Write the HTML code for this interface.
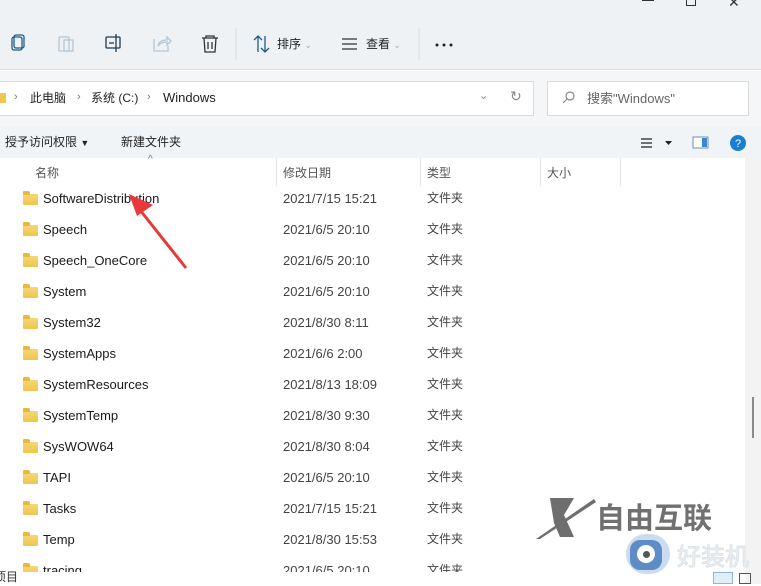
<!DOCTYPE html>
<html><head><meta charset="utf-8"><style>
*{margin:0;padding:0;box-sizing:border-box}
body{width:761px;height:584px;overflow:hidden;background:#fff;font-family:"Liberation Sans","Noto Sans CJK SC",sans-serif;font-size:12px;line-height:16px;color:#222;position:relative}
.abs{position:absolute}
.top{left:0;top:0;width:761px;height:70px;background:#eef2f5;border-bottom:1px solid #dde1e4}
.addrzone{left:0;top:71px;width:761px;height:56px;background:#f4f6f8}
.addr{left:-2px;top:81px;width:536px;height:35px;background:#fff;border:1px solid #d9dcdf}
.search{left:547px;top:81px;width:202px;height:35px;background:#fff;border:1px solid #d9dcdf}
.cmd{left:0;top:127px;width:761px;height:31px;background:#f1f4f7}
.folder{width:15px;height:11px;background:linear-gradient(#f7d774,#eec64f);border-radius:1px;position:absolute}
.folder:before{content:"";position:absolute;left:0;top:-3px;width:7px;height:4px;background:#e8b93c;border-radius:1px 2px 0 0}
.row{position:absolute;left:0;width:745px;height:31px;line-height:31px;font-size:13px}
.row span{position:absolute;top:0;line-height:31px;height:31px}
.row .n{left:43px;color:#1a1a1a}
.row .d{left:283px;color:#444}
.row .t{left:427px;color:#444;font-size:12px}
.row .folder{left:23px;top:11px}
.sep{position:absolute;top:158px;width:1px;height:28px;background:#e5e5e5}
</style></head><body>
<div class="abs top"></div>
<div class="abs" style="left:642px;top:0;width:12px;height:1px;background:#333"></div>
<div class="abs" style="left:686px;top:-4px;width:10px;height:10px;border:1px solid #333"></div>
<div class="abs" style="left:728px;top:-6px;font-size:14px;color:#333">✕</div>
<svg class="abs" style="left:0;top:25px" width="460" height="40" viewBox="0 0 460 40" fill="none" stroke-width="1.3">
<rect x="12" y="12" width="10" height="13" rx="2" stroke="#1f5a8a"/><rect x="14" y="10" width="10" height="13" rx="2" stroke="#1f5a8a"/>
<rect x="59" y="12" width="10" height="14" rx="1" stroke="#b4c6d4"/><rect x="64" y="15" width="9" height="11" stroke="#b4c6d4"/>
<rect x="106" y="12" width="14" height="11" rx="1" stroke="#1e3c55"/><line x1="116" y1="9" x2="116" y2="27" stroke="#1e3c55"/><line x1="109" y1="18" x2="114" y2="18" stroke="#1e3c55"/>
<path d="M154 14v12h14v-5M158 21c1-5 5-6 9-6v-3l4 4-4 4v-3c-4 0-7 1-9 4" stroke="#b4c6d4"/>
<path d="M202 13h16M206 13v-2h8v2M204 13l1 14h10l1-14M208 17v7M212 17v7" stroke="#333"/>
<line x1="236" y1="3" x2="236" y2="35" stroke="#dde1e4"/>
<path d="M258 11v16M254 15l4-4 4 4M265 11v16M261 23l4 4 4-4" stroke="#1f5a8a"/>
<path d="M342 14h15M342 19h15M342 24h15" stroke="#333"/>
<line x1="419" y1="3" x2="419" y2="35" stroke="#dde1e4"/>
<circle cx="437" cy="20" r="1.5" fill="#222" stroke="none"/><circle cx="444" cy="20" r="1.5" fill="#222" stroke="none"/><circle cx="451" cy="20" r="1.5" fill="#222" stroke="none"/>
</svg>
<div class="abs" style="left:277px;top:36px">排序 <span style="color:#aaa;font-size:9px">⌄</span></div>
<div class="abs" style="left:366px;top:36px">查看 <span style="color:#aaa;font-size:9px">⌄</span></div>
<div class="abs addrzone"></div>
<div class="abs addr"></div>
<div class="abs search"></div>
<div class="abs" style="left:0;top:93px;width:6px;height:10px;background:#f0c850"></div>
<div class="abs" style="left:14px;top:89px;color:#777;font-size:11px">›</div>
<div class="abs" style="left:30px;top:90px">此电脑</div>
<div class="abs" style="left:77px;top:89px;color:#777;font-size:11px">›</div>
<div class="abs" style="left:91px;top:90px">系统 (C:)</div>
<div class="abs" style="left:147px;top:89px;color:#777;font-size:11px">›</div>
<div class="abs" style="left:163px;top:90px;font-size:13px">Windows</div>
<div class="abs" style="left:479px;top:88px;color:#888;font-size:11px">⌄</div>
<div class="abs" style="left:510px;top:88px;color:#888;font-size:14px">↻</div>
<svg class="abs" style="left:562px;top:90px" width="14" height="14" fill="none" stroke="#888" stroke-width="1.2"><circle cx="8" cy="6" r="4"/><line x1="5" y1="9" x2="1" y2="13"/></svg>
<div class="abs" style="left:587px;top:91px;color:#666;font-size:13px">搜索"Windows"</div>
<div class="abs cmd"></div>
<div class="abs" style="left:5px;top:134px">授予访问权限 <span style="font-size:9px">▼</span></div>
<div class="abs" style="left:121px;top:134px">新建文件夹</div>
<svg class="abs" style="left:640px;top:135px" width="120" height="18"><path d="M1 4h11M1 8h11M1 12h11" stroke="#222" stroke-width="1.2"/><path d="M25 6h7l-3.5 4z" fill="#222"/><rect x="53" y="2" width="15" height="11" fill="#fff" stroke="#6a8fb0"/><rect x="62" y="3" width="5" height="9" fill="#3b87cf"/><circle cx="98" cy="8" r="8" fill="#1a7fd4"/><text x="98" y="12" font-size="11" fill="#fff" text-anchor="middle" font-family="Liberation Sans">?</text></svg>
<div class="abs" style="left:35px;top:165px;color:#555">名称</div>
<div class="abs" style="left:148px;top:152px;color:#777;font-size:10px">^</div>
<div class="abs" style="left:283px;top:165px;color:#555">修改日期</div>
<div class="abs" style="left:427px;top:165px;color:#555">类型</div>
<div class="abs" style="left:547px;top:165px;color:#555">大小</div>
<div class="sep" style="left:276px"></div><div class="sep" style="left:420px"></div><div class="sep" style="left:540px"></div><div class="sep" style="left:620px"></div>
<div class="abs" style="left:745px;top:158px;width:16px;height:426px;background:#f3f3f3"></div>
<div class="abs" style="left:752px;top:397px;width:2px;height:41px;background:#8a8a8a"></div>
<div class="row" style="top:183px"><div class="folder"></div><span class="n">SoftwareDistribution</span><span class="d">2021/7/15 15:21</span><span class="t">文件夹</span></div>
<div class="row" style="top:214px"><div class="folder"></div><span class="n">Speech</span><span class="d">2021/6/5 20:10</span><span class="t">文件夹</span></div>
<div class="row" style="top:245px"><div class="folder"></div><span class="n">Speech_OneCore</span><span class="d">2021/6/5 20:10</span><span class="t">文件夹</span></div>
<div class="row" style="top:276px"><div class="folder"></div><span class="n">System</span><span class="d">2021/6/5 20:10</span><span class="t">文件夹</span></div>
<div class="row" style="top:307px"><div class="folder"></div><span class="n">System32</span><span class="d">2021/8/30 8:11</span><span class="t">文件夹</span></div>
<div class="row" style="top:338px"><div class="folder"></div><span class="n">SystemApps</span><span class="d">2021/6/6 2:00</span><span class="t">文件夹</span></div>
<div class="row" style="top:369px"><div class="folder"></div><span class="n">SystemResources</span><span class="d">2021/8/13 18:09</span><span class="t">文件夹</span></div>
<div class="row" style="top:400px"><div class="folder"></div><span class="n">SystemTemp</span><span class="d">2021/8/30 9:30</span><span class="t">文件夹</span></div>
<div class="row" style="top:431px"><div class="folder"></div><span class="n">SysWOW64</span><span class="d">2021/8/30 8:04</span><span class="t">文件夹</span></div>
<div class="row" style="top:462px"><div class="folder"></div><span class="n">TAPI</span><span class="d">2021/6/5 20:10</span><span class="t">文件夹</span></div>
<div class="row" style="top:493px"><div class="folder"></div><span class="n">Tasks</span><span class="d">2021/7/15 15:21</span><span class="t">文件夹</span></div>
<div class="row" style="top:524px"><div class="folder"></div><span class="n">Temp</span><span class="d">2021/8/30 15:53</span><span class="t">文件夹</span></div>
<div class="row" style="top:555px"><div class="folder"></div><span class="n">tracing</span><span class="d">2021/6/5 20:10</span><span class="t">文件夹</span></div>
<div class="abs" style="left:0;top:572px;width:745px;height:12px;background:#fff"></div>
<div class="abs" style="left:-6px;top:570px;color:#333;line-height:14px">项目</div>
<div class="abs" style="left:713px;top:572px;width:20px;height:12px;background:#dfeef8;border:1px solid #8bb8da"></div>
<div class="abs" style="left:739px;top:573px;width:12px;height:11px;border:1px solid #555"></div>
<svg class="abs" style="left:120px;top:180px" width="80" height="95"><line x1="66" y1="88" x2="20" y2="30" stroke="#e8393a" stroke-width="3"/><path d="M9 14l24 11-16 11z" fill="#e8393a"/></svg>
<svg class="abs" style="left:530px;top:495px" width="200" height="50"><path d="M20 3h24L34 20l10 22H30L24 28z" fill="#6e6e6e"/><path d="M6 44L64 4l2 3L10 44z" fill="#6e6e6e"/><text x="66" y="33" font-size="29" font-weight="bold" fill="#707070" font-family="Noto Sans CJK SC,sans-serif">自由互联</text></svg>
<div class="abs" style="left:626px;top:534px;width:44px;height:40px;border-radius:20px;background:#c9dcf0"></div>
<div class="abs" style="left:630px;top:540px;width:32px;height:30px;border-radius:10px;background:#5f8cc7"></div>
<div class="abs" style="left:637px;top:545px;width:18px;height:18px;border-radius:50%;background:#fff"></div>
<div class="abs" style="left:643px;top:551px;width:7px;height:7px;border-radius:50%;background:#555"></div>
<div class="abs" style="left:677px;top:540px;font-size:24px;line-height:30px;color:#eef2f6;font-family:'Noto Sans CJK SC',sans-serif;-webkit-text-stroke:1px #dde3ea">好装机</div>
</body></html>
